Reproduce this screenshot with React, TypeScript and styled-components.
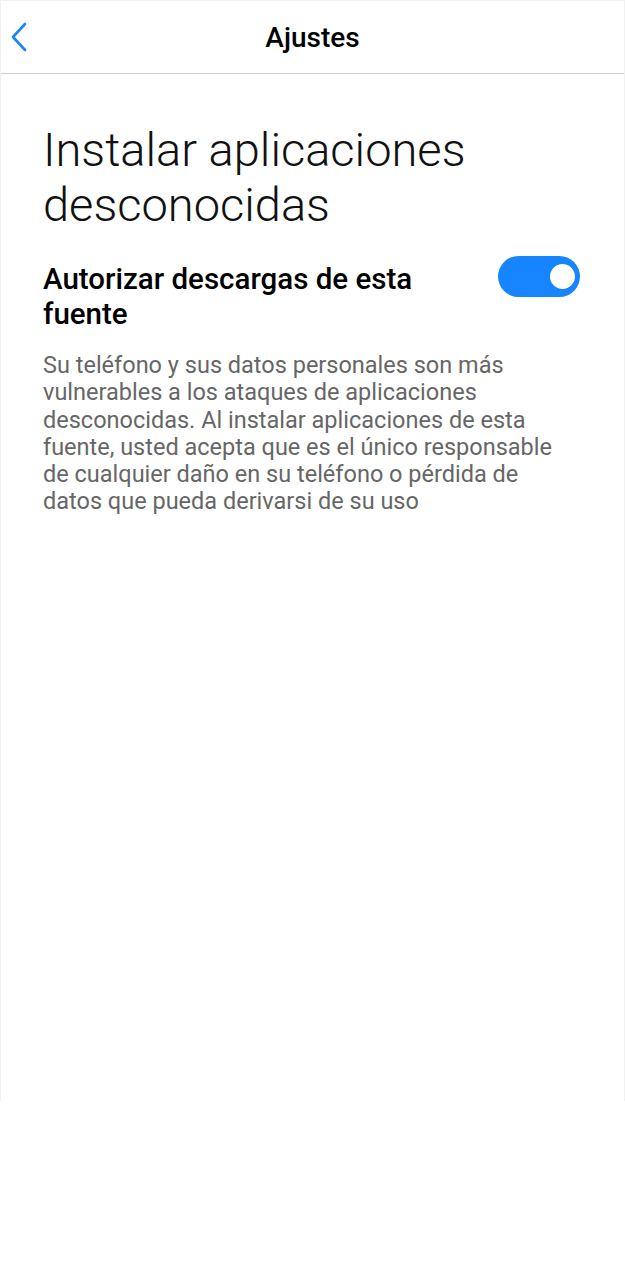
import React from "react";
import styled, { createGlobalStyle } from "styled-components";

const Global = createGlobalStyle`
  html, body { margin: 0; padding: 0; background: #ffffff; }
  body { font-family: Roboto, "Noto Sans", sans-serif; }
`;

const Frame = styled.div`
  box-sizing: border-box;
  width: 625px;
  height: 1101px;
  border: 1px solid #f1f1f1;
  border-bottom: none;
  background: #ffffff;
  display: flex;
  flex-direction: column;
`;

const Header = styled.header`
  position: relative;
  height: 72px;
  flex: none;
  border-bottom: 1px solid #cfcfcf;
  display: flex;
  align-items: center;
  justify-content: center;
`;

const BackButton = styled.button`
  position: absolute;
  left: 8px;
  top: 20px;
  width: 20px;
  height: 32px;
  padding: 0;
  border: none;
  background: transparent;
  display: flex;
  align-items: center;
  justify-content: center;
`;

const Title = styled.h1`
  margin: 0;
  font-family: Roboto, sans-serif;
  font-weight: 500;
  font-size: 28px;
  color: #000000;
`;

const Content = styled.main`
  padding: 48px 42px 0 42px;
  display: flex;
  flex-direction: column;
`;

const PageTitle = styled.h2`
  margin: 0;
  font-family: Roboto, sans-serif;
  font-weight: 300;
  font-size: 47px;
  line-height: 55px;
  color: #111111;
`;

const Row = styled.div`
  margin-top: 30px;
  display: flex;
  align-items: flex-start;
  justify-content: space-between;
  gap: 20px;
`;

const RowLabel = styled.div`
  font-family: Roboto, sans-serif;
  font-weight: 500;
  font-size: 29.5px;
  line-height: 35px;
  color: #000000;
  max-width: 420px;
`;

const Switch = styled.div<{ $on: boolean }>`
  flex: none;
  width: 82px;
  height: 41px;
  border-radius: 21px;
  margin-top: -6px;
  margin-right: 2px;
  background: ${(p) => (p.$on ? "#1685ff" : "#d9d9d9")};
  display: flex;
  align-items: center;
  justify-content: ${(p) => (p.$on ? "flex-end" : "flex-start")};
  padding: 0 5px;
  box-sizing: border-box;
`;

const Knob = styled.div`
  width: 25px;
  height: 25px;
  border-radius: 50%;
  background: #ffffff;
`;

const Description = styled.p`
  margin: 20px 0 0 0;
  font-family: Roboto, sans-serif;
  font-weight: 400;
  font-size: 23.5px;
  line-height: 27.3px;
  color: #666666;
`;

export default function App() {
  return (
    <>
      <Global />
      <Frame>
        <Header>
          <BackButton aria-label="Atrás">
            <svg width="18" height="30" viewBox="0 0 18 30" fill="none">
              <path d="M15 2 L3 15 L15 28" stroke="#1a84ff" strokeWidth="2.6" strokeLinecap="round" strokeLinejoin="round" />
            </svg>
          </BackButton>
          <Title>Ajustes</Title>
        </Header>
        <Content>
          <PageTitle>Instalar aplicaciones desconocidas</PageTitle>
          <Row>
            <RowLabel>Autorizar descargas de esta fuente</RowLabel>
            <Switch $on={true}>
              <Knob />
            </Switch>
          </Row>
          <Description>
            Su teléfono y sus datos personales son más vulnerables a los ataques de aplicaciones
            desconocidas. Al instalar aplicaciones de esta fuente, usted acepta que es el único
            responsable de cualquier daño en su teléfono o pérdida de datos que pueda derivarsi de su uso
          </Description>
        </Content>
      </Frame>
    </>
  );
}
